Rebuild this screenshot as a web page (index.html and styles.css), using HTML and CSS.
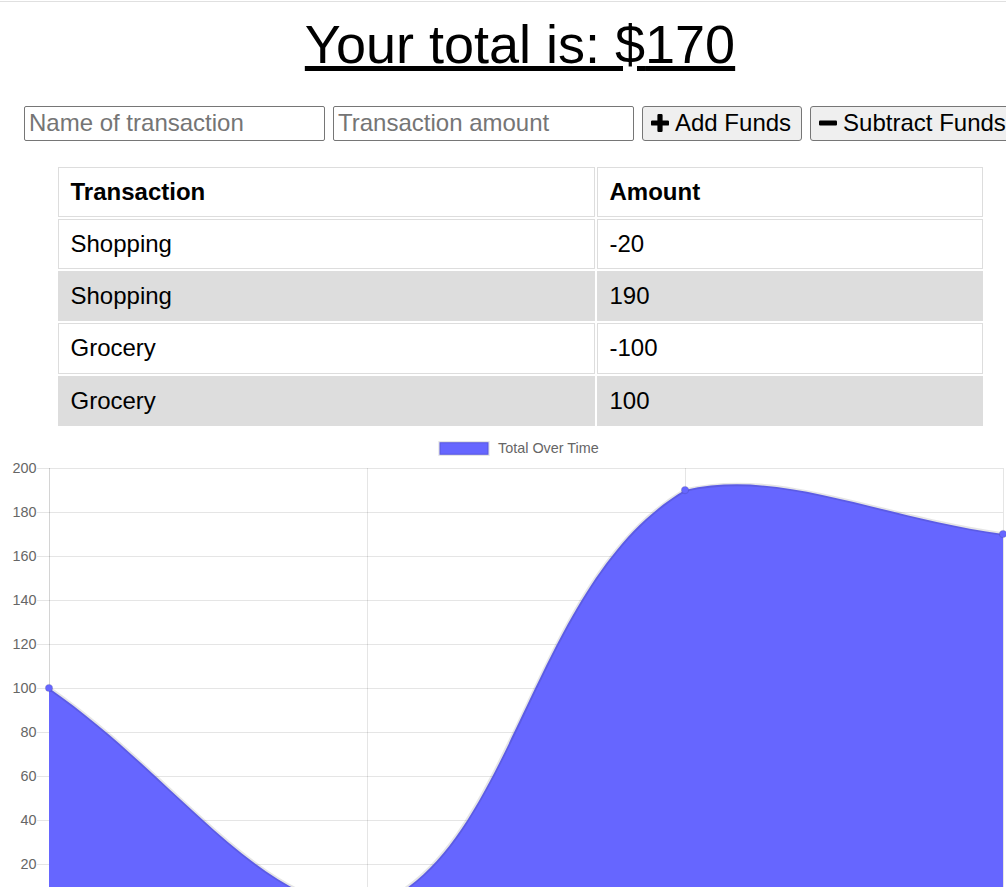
FILE: index.html
```html
<!DOCTYPE html>
<html lang="en">
<head>
<meta charset="utf-8">
<title>Budget Tracker</title>
<link rel="stylesheet" href="styles.css">
</head>
<body>
<div class="topline"></div>
<main class="page">
  <h1 class="total">Your total is: $<span class="total-value">170</span></h1>

  <form class="entry">
    <input type="text" class="field" placeholder="Name of transaction">
    <input type="text" class="field" placeholder="Transaction amount">
    <button type="button" class="btn">
      <svg class="ico" viewBox="0 0 18 18" aria-hidden="true"><path d="M6.4 1.2Q6.4 0 7.6 0h2.8q1.2 0 1.2 1.2v5.2h5.2q1.2 0 1.2 1.2v2.8q0 1.2-1.2 1.2h-5.2v5.2q0 1.2-1.2 1.2H7.6q-1.2 0-1.2-1.2v-5.2H1.2Q0 11.6 0 10.4V7.6q0-1.2 1.2-1.2h5.2z"/></svg>
      <span>Add Funds</span>
    </button>
    <button type="button" class="btn">
      <svg class="ico" viewBox="0 0 18 18" aria-hidden="true"><rect x="0" y="6.4" width="18" height="5.2" rx="1.1"/></svg>
      <span>Subtract Funds</span>
    </button>
  </form>

  <table class="tx">
    <colgroup><col class="col-name"><col class="col-amount"></colgroup>
    <thead>
      <tr><th>Transaction</th><th>Amount</th></tr>
    </thead>
    <tbody>
      <tr><td>Shopping</td><td>-20</td></tr>
      <tr class="alt"><td>Shopping</td><td>190</td></tr>
      <tr><td>Grocery</td><td>-100</td></tr>
      <tr class="alt"><td>Grocery</td><td>100</td></tr>
    </tbody>
  </table>

  <div class="chart">
    <svg class="chart-svg" width="1024" height="470" viewBox="0 0 1024 470">
      <rect class="legend-box" x="431.5" y="10.2" width="49" height="12.6"/>
      <text class="legend-text" x="490" y="21">Total Over Time</text>

      <g class="grid">
        <line x1="29" y1="36.5" x2="995" y2="36.5"/>
        <line x1="29" y1="80.5" x2="995" y2="80.5"/>
        <line x1="29" y1="124.5" x2="995" y2="124.5"/>
        <line x1="29" y1="168.5" x2="995" y2="168.5"/>
        <line x1="29" y1="212.5" x2="995" y2="212.5"/>
        <line x1="29" y1="256.5" x2="995" y2="256.5"/>
        <line x1="29" y1="300.5" x2="995" y2="300.5"/>
        <line x1="29" y1="344.5" x2="995" y2="344.5"/>
        <line x1="29" y1="388.5" x2="995" y2="388.5"/>
        <line x1="29" y1="432.5" x2="995" y2="432.5"/>
        <line x1="29" y1="476.5" x2="995" y2="476.5"/>
        <line x1="359.5" y1="36" x2="359.5" y2="488"/>
        <line x1="677.5" y1="36" x2="677.5" y2="488"/>
        <line x1="995.5" y1="36" x2="995.5" y2="488"/>
        <line class="axis" x1="41.5" y1="36" x2="41.5" y2="488"/>
      </g>

      <g class="ticks">
        <text x="28.5" y="41">200</text>
        <text x="28.5" y="85">180</text>
        <text x="28.5" y="129">160</text>
        <text x="28.5" y="173">140</text>
        <text x="28.5" y="217">120</text>
        <text x="28.5" y="261">100</text>
        <text x="28.5" y="305">80</text>
        <text x="28.5" y="349">60</text>
        <text x="28.5" y="393">40</text>
        <text x="28.5" y="437">20</text>
      </g>

      <path class="area" d="M41,256 C168.2,344 251.1,476 359,476 C505.5,430.4 519.1,150.9 677,58 C773.5,36 867.8,84.4 995,102 L995,476 L41,476 Z"/>
      <path class="line" d="M41,256 C168.2,344 251.1,476 359,476 C505.5,430.4 519.1,150.9 677,58 C773.5,36 867.8,84.4 995,102"/>

      <g class="points">
        <circle cx="41" cy="256" r="3.6"/>
        <circle cx="359" cy="476" r="3.6"/>
        <circle cx="677" cy="58" r="3.6"/>
        <circle cx="995" cy="102" r="3.6"/>
      </g>
    </svg>
  </div>
</main>
</body>
</html>
```

FILE: styles.css
```css
html {
  font-family: "Liberation Sans", Arial, sans-serif;
}

body {
  margin: 0;
  color: #000;
  background: #fff;
}

.topline {
  margin-top: 1px;
  border-top: 1px solid #e0e0e0;
}

.page {
  width: 1024px;
  margin: 0 8px;
}

.total {
  margin: 11px 0 30.5px;
  font-size: 54px;
  font-weight: normal;
  line-height: normal;
  text-align: center;
  text-decoration: underline;
}

.entry {
  display: flex;
  gap: 8px;
  margin: 0;
  padding-left: 16px;
}

.field {
  box-sizing: border-box;
  width: 301px;
  height: 35px;
  margin: 0;
  padding: 0 4px 1px;
  border: 1px solid #767676;
  border-radius: 2px;
  font-family: "Liberation Sans", Arial, sans-serif;
  font-size: 24px;
  color: #000;
  background: #fff;
}

.field::placeholder {
  color: #757575;
  opacity: 1;
}

.btn {
  box-sizing: border-box;
  display: inline-flex;
  align-items: center;
  gap: 6px;
  flex: none;
  height: 35px;
  margin: 0;
  padding: 0 10px 1px 8px;
  border: 1px solid #767676;
  border-radius: 3px;
  background: #efefef;
  font-family: "Liberation Sans", Arial, sans-serif;
  font-size: 24px;
  color: #000;
  white-space: nowrap;
}

.ico {
  width: 18px;
  height: 18px;
  fill: #000;
  flex: none;
}

.tx {
  width: 929px;
  margin: 24px auto 0;
  border-collapse: separate;
  border-spacing: 2px;
  table-layout: fixed;
  font-size: 24px;
}

.col-name {
  width: 537px;
}

.col-amount {
  width: 386px;
}

.tx th,
.tx td {
  padding: 10.15px 12px;
  border: 1px solid #ddd;
  text-align: left;
  line-height: normal;
}

.tx th {
  font-weight: bold;
}

.tx .alt td {
  background: #ddd;
}

.chart {
  margin-top: 4px;
  height: 460px;
  overflow: hidden;
}

.chart-svg {
  display: block;
  font-family: "Liberation Sans", Arial, sans-serif;
}

.legend-box {
  fill: #6666ff;
  stroke: rgba(0, 0, 0, 0.1);
  stroke-width: 2.4;
}

.legend-text {
  font-size: 14.4px;
  fill: #666;
}

.grid line {
  stroke: rgba(0, 0, 0, 0.1);
  stroke-width: 1;
}

.grid .axis {
  stroke: rgba(0, 0, 0, 0.17);
}

.ticks text {
  font-size: 14.4px;
  fill: #666;
  text-anchor: end;
}

.area {
  fill: #6666ff;
}

.line {
  fill: none;
  stroke: rgba(0, 0, 0, 0.1);
  stroke-width: 3.6;
}

.points circle {
  fill: #6666ff;
  stroke: rgba(0, 0, 0, 0.1);
  stroke-width: 1.2;
}
```
